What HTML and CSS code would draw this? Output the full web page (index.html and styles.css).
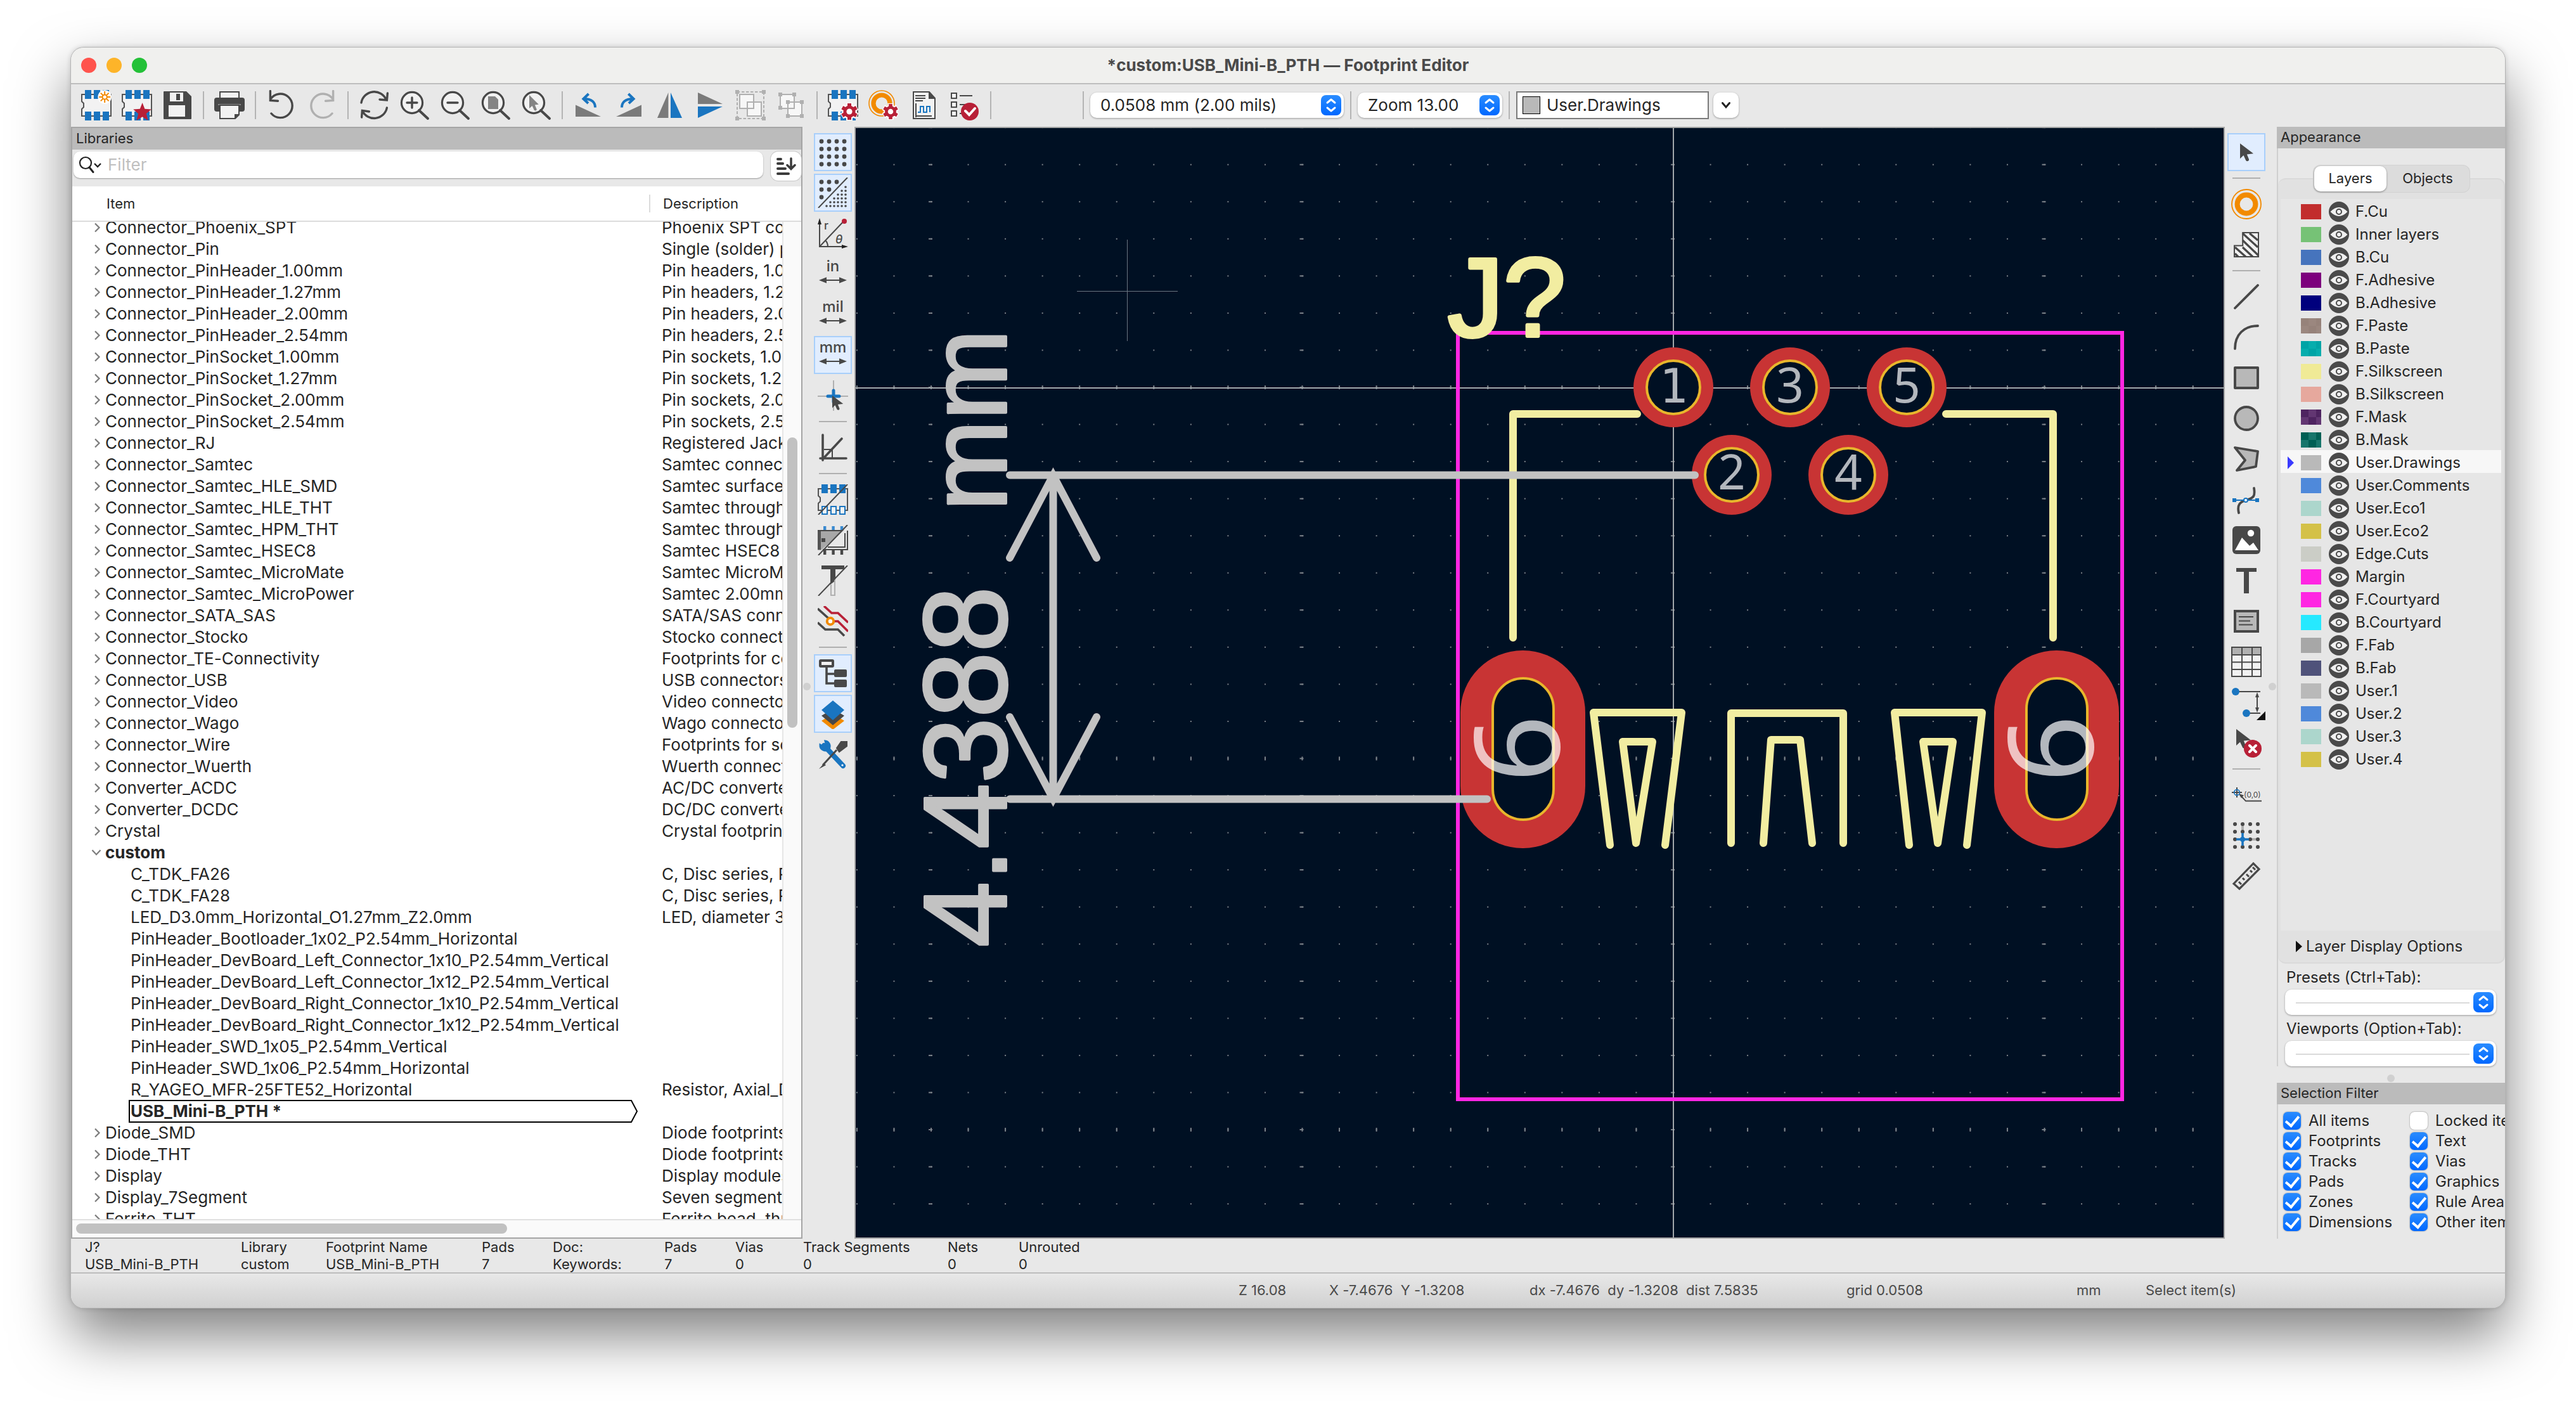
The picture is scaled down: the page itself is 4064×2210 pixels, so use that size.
FILE: index.html
```html
<!DOCTYPE html>
<html lang="en">
<head>
<meta charset="utf-8">
<title>*custom:USB_Mini-B_PTH — Footprint Editor</title>
<link rel="stylesheet" href="styles.css">
</head>
<body>
<svg class="defs" aria-hidden="true">
  <symbol id="fp" viewBox="0 0 24 24"><path d="M.5 3.5h23v17H.5v-5.500l1.500-1.500v-3L.5 9z" fill="#f2f2f2" stroke="#545454"/><path d="M3 0h5v7H3zM10 0h5v7h-5zM17 0h5v7h-5zM3 17h5v7H3zM10 17h5v7h-5zM17 17h5v7h-5z" fill="#1a75c0"/></symbol>
  <symbol id="gear" viewBox="0 0 14 14"><path d="M7 0v14M1 3.500l12 7M13 3.500l-12 7" stroke="#fff" stroke-width="5"/><circle cx="7" cy="7" r="5.800" fill="#fff"/><path d="M7 .5v13M1.400 3.800l11.200 6.400M12.600 3.800L1.400 10.200" stroke="#b82037" stroke-width="3"/><circle cx="7" cy="7" r="4.800" fill="#b82037"/><circle cx="7" cy="7" r="2.300" fill="#fff"/></symbol>
  <symbol id="lens" viewBox="0 0 24 24"><circle cx="10" cy="10" r="8.300" fill="#f2f2f2" stroke="#484848" stroke-width="1.600"/><path d="M15.500 16l7 6.500" stroke="#484848" stroke-width="2" stroke-linecap="round"/></symbol>
  <symbol id="dim" viewBox="0 0 24 24"><path d="M4 17h16" stroke="#484848"/><path d="M1 17l6-2.400v4.800zM23 17l-6-2.400v4.800z" fill="#484848"/></symbol>
  <symbol id="cursor" viewBox="0 0 12 16"><path d="M0 0v13l3-2.800 2 4.300c.8 1.400 3.200.6 2.600-1L5.900 9.300l5.600-.6z" fill="#484848"/></symbol>
  <symbol id="eye" viewBox="0 0 32 32"><circle cx="16" cy="16" r="16" fill="#4a4a4a"/><path d="M2.500 16Q16 2 29.500 16 16 30 2.500 16z" fill="#f0f0f0"/><circle cx="16" cy="16" r="4" fill="none" stroke="#4a4a4a" stroke-width="2"/></symbol>
  <symbol id="updown" viewBox="0 0 32 32"><path d="M10 12l6-5 6 5M10 20l6 5 6-5" fill="none" stroke="#fff" stroke-width="3" stroke-linecap="round" stroke-linejoin="round"/></symbol>
  <symbol id="closed" viewBox="0 0 12 16"><path d="M2 1.500L8.500 8 2 14.500" fill="none" stroke="#7c7c7c" stroke-width="2.200"/></symbol>
  <symbol id="open" viewBox="0 0 16 12"><path d="M1.500 2L8 9l6.500-7" fill="none" stroke="#7c7c7c" stroke-width="2.200"/></symbol>
</svg>

<div class="window">
  <header class="titlebar">
    <div class="lights"><button class="light red" aria-label="Close"></button><button class="light amber" aria-label="Minimize"></button><button class="light green" aria-label="Zoom"></button></div>
    <h1>*custom:USB_Mini-B_PTH — Footprint Editor</h1>
  </header>

  <div class="toolbar">
    <button class="icon" aria-label="New footprint"><svg viewBox="0 0 24 24"><use href="#fp"/><circle cx="18.600" cy="5.500" r="5.400" fill="#fff"/><path d="M18.600 1v3M18.600 7v3M14.100 5.500h3M20.100 5.500h3M15.400 2.300l2 2M19.800 6.700l2 2M21.800 2.300l-2 2M17.400 6.700l-2 2" stroke="#f28a00" stroke-width="1"/><circle cx="18.600" cy="5.500" r="1.800" fill="#fff" stroke="#f28a00"/></svg></button>
    <button class="icon" aria-label="Edit library footprint"><svg viewBox="0 0 24 24"><use href="#fp"/><path d="M16.300 10l1.900 4.900 5.200.3-4 3.400 1.400 5.400-4.500-2.900-4.600 2.900 1.400-5.400-4-3.400 5.300-.3z" fill="#b82037"/></svg></button>
    <button class="icon" aria-label="Save"><svg viewBox="0 0 24 24"><path d="M1 1.500q0-.5.500-.5H19l4 4v17.500q0 .5-.5.500h-21q-.5 0-.5-.5z" fill="#484848"/><path d="M6 2h10.500v7H6zM5 12h13v9H5z" fill="#f2f2f2"/><path d="M11 3h3v5h-3z" fill="#484848"/></svg></button>
    <i class="sep"></i>
    <button class="icon" aria-label="Print"><svg viewBox="0 0 24 24"><rect y="6" width="24" height="11" rx="2" fill="#484848"/><path d="M4.500 6V1.500h15V6" fill="#f2f2f2" stroke="#484848"/><path d="M3 11.500h18" stroke="#888" stroke-width="1"/><path d="M4.500 12h15v7.500l-3 3h-12z" fill="#f2f2f2" stroke="#484848"/><path d="M20 19h-4v4z" fill="#484848"/></svg></button>
    <i class="sep"></i>
    <button class="icon" aria-label="Undo"><svg viewBox="0 0 24 24" fill="none" stroke="#484848" stroke-width="1.700" stroke-linecap="round"><path d="M3.200.8v7.400l6 .4M3.500 7A9.400 9.400 0 1 1 4 18.500"/></svg></button>
    <button class="icon" aria-label="Redo"><svg viewBox="0 0 24 24" fill="none" stroke="#b0b0b0" stroke-width="1.700" stroke-linecap="round"><path d="M20.800.8v7.400l-6 .4M20.500 7A9.400 9.400 0 1 0 20 18.500"/></svg></button>
    <i class="sep"></i>
    <button class="icon" aria-label="Refresh"><svg viewBox="0 0 24 24" fill="none" stroke="#484848" stroke-width="1.700" stroke-linecap="round"><path d="M2 10A10.300 10.300 0 0 1 21.600 7.600M22.700 2.500l-.5 5.500-5.700-.5M22.200 14A10.300 10.300 0 0 1 2.800 16.400M2.300 21.500l.4-5.300 5.500.8"/></svg></button>
    <button class="icon" aria-label="Zoom in"><svg viewBox="0 0 24 24"><use href="#lens"/><path d="M6 10h8M10 6v8" stroke="#484848" stroke-width="1.700" stroke-linecap="round"/></svg></button>
    <button class="icon" aria-label="Zoom out"><svg viewBox="0 0 24 24"><use href="#lens"/><path d="M6 10h8" stroke="#484848" stroke-width="1.700" stroke-linecap="round"/></svg></button>
    <button class="icon" aria-label="Zoom to fit"><svg viewBox="0 0 24 24"><use href="#lens"/><path d="M6 5h5.500L14 7.500V15H6z" fill="#848484"/></svg></button>
    <button class="icon" aria-label="Zoom to selection"><svg viewBox="0 0 24 24"><use href="#lens"/><path d="M6.500 4v10.500l2.300-2 1.500 3.300c.6 1 2.400.4 2-.8l-1.400-3.300 3-.3z" fill="#848484"/></svg></button>
    <i class="sep"></i>
    <button class="icon" aria-label="Rotate counterclockwise"><svg viewBox="0 0 24 24"><path d="M2 11.700L22 21H2z" fill="#7a7a7a"/><path d="M17.500 13.800C17.500 9.500 14.500 7 9 7M12.300 3L8.200 7l3.800 3.500" fill="none" stroke="#1a75c0" stroke-width="2"/></svg></button>
    <button class="icon" aria-label="Rotate clockwise"><svg viewBox="0 0 24 24"><path d="M22 11.700L2 21h20z" fill="#7a7a7a"/><path d="M6.500 13.800C6.500 9.500 9.500 7 15 7M11.700 3l4.100 4-3.800 3.500" fill="none" stroke="#1a75c0" stroke-width="2"/></svg></button>
    <button class="icon" aria-label="Mirror horizontally"><svg viewBox="0 0 24 24"><path d="M11.200 2v20H2.500z" fill="#7a7a7a"/><path d="M13 2v20h9z" fill="#1a75c0"/></svg></button>
    <button class="icon" aria-label="Mirror vertically"><svg viewBox="0 0 24 24"><path d="M2.500 2L22 11H2.500z" fill="#7a7a7a"/><path d="M2.500 13H22L2.500 22z" fill="#1a75c0"/></svg></button>
    <button class="icon" aria-label="Group"><svg viewBox="0 0 24 24"><path d="M1.500 1.500h21v21h-21z" fill="none" stroke="#b0b0b0" stroke-dasharray="2.200 1.300"/><path d="M0 0h3v3H0zM21 0h3v3h-3zM0 21h3v3H0zM21 21h3v3h-3z" fill="#b0b0b0"/><path d="M3.500 3.500h11v11h-11zM9.500 9.500h11v11h-11z" fill="#f7f7f7" stroke="#b0b0b0"/></svg></button>
    <button class="icon" aria-label="Ungroup"><svg viewBox="0 0 24 24"><path d="M3.500 3.500h11v11h-11zM9.500 9.500h11v11h-11z" fill="#f7f7f7" stroke="#b0b0b0"/><path d="M2 2h3v3H2zM13 2h3v3h-3zM2 12.500h3v3H2zM8 8h3v3H8zM19 8h3v3h-3zM8 19h3v3H8zM19 19h3v3h-3z" fill="#b0b0b0"/></svg></button>
    <i class="sep"></i>
    <button class="icon" aria-label="Footprint properties"><svg viewBox="0 0 24 24"><use href="#fp"/><use href="#gear" x="10" y="10" width="14" height="14"/></svg></button>
    <button class="icon" aria-label="Default pad properties"><svg viewBox="0 0 24 24"><circle cx="10.500" cy="10.500" r="10" fill="none" stroke="#f28a00" stroke-width=".8"/><circle cx="10.500" cy="10.500" r="6.500" fill="none" stroke="#f28a00" stroke-width="3.600"/><use href="#gear" x="11" y="10.500" width="13" height="13"/></svg></button>
    <button class="icon" aria-label="Datasheet"><svg viewBox="0 0 24 24"><path d="M3.500 1.500H16l4.500 5v16h-17z" fill="#f2f2f2" stroke="#484848"/><path d="M15.500 1l5.500 6h-5.500z" fill="#484848"/><path d="M5 4.500h8M5 6.500h8M5 8.500h6M5.500 10.500v11M5 20.500h13" stroke="#484848"/><path d="M7 17.500h2V13h2.500v4.500H14V13h2.500v4.500" fill="none" stroke="#1a75c0"/></svg></button>
    <button class="icon" aria-label="Check footprint"><svg viewBox="0 0 24 24"><path d="M1.500 2.500h4v4h-4zM1.500 9.500h4v4h-4zM1.500 16.500h4v4h-4z" fill="#f7f7f7" stroke="#484848"/><path d="M8 4.500h10M8 11.500h5M8 18.500h4" stroke="#484848"/><circle cx="16" cy="17" r="7" fill="#b82037"/><path d="M12.500 16.500l3 3 4.500-5" fill="none" stroke="#fff" stroke-width="2" stroke-linecap="round"/></svg></button>
    <i class="sep"></i>
    <span class="spacer"></span>
    <i class="sep"></i>
    <div class="combos">
      <label class="pick grid-pick"><select aria-label="Grid"><option>0.0508 mm (2.00 mils)</option></select><svg class="ud"><use href="#updown"/></svg></label>
      <i class="sep"></i>
      <label class="pick zoom-pick"><select aria-label="Zoom"><option>Zoom 13.00</option></select><svg class="ud"><use href="#updown"/></svg></label>
      <i class="sep"></i>
      <div class="layerbox"><span class="chip"></span><span>User.Drawings</span></div>
      <button class="drop" aria-label="Choose layer"><svg viewBox="0 0 16 12"><path d="M2.500 2.500L8 9l5.500-6.500" fill="none" stroke="#222" stroke-width="3" stroke-linecap="round"/></svg></button>
    </div>
  </div>

  <main class="work">
    <section class="libs">
      <h2 class="caption">Libraries</h2>
      <div class="search">
        <label class="field"><svg viewBox="0 0 38 28"><circle cx="11" cy="11" r="9" fill="none" stroke="#222" stroke-width="2.200"/><path d="M17 18l6 7.500" stroke="#222" stroke-width="3" stroke-linecap="round"/><path d="M25 12l5 5 5-5" fill="none" stroke="#222" stroke-width="2.400"/></svg><input type="text" placeholder="Filter" aria-label="Filter"></label>
        <button class="sort" aria-label="Sort"><svg viewBox="0 0 34 30"><path d="M4 4h5M4 11h8M4 19h12M4 27h17" stroke="#3c3c3c" stroke-width="4" stroke-linecap="round"/><path d="M25 3v16M19 13.500l6 6 6-6" fill="none" stroke="#3c3c3c" stroke-width="3.500" stroke-linecap="round"/></svg></button>
      </div>
      <div class="heads"><span>Item</span><span>Description</span></div>
      <div class="treebox">
        <div class="clip">
          <table class="tree"><colgroup><col class="c1"><col></colgroup><tbody id="rows"></tbody></table>
        </div>
        <div class="vbar"><i></i></div>
      </div>
      <div class="hbar"><i></i></div>
    </section>

    <nav class="side left">
      <button class="tool on" aria-label="Show grid"><svg viewBox="0 0 24 24"><path d="M3 3.500h.01M9 3.500h.01M15 3.500h.01M21 3.500h.01M3 9.500h.01M9 9.500h.01M15 9.500h.01M21 9.500h.01M3 15.500h.01M9 15.500h.01M15 15.500h.01M21 15.500h.01M3 21.500h.01M9 21.500h.01M15 21.500h.01M21 21.500h.01" stroke="#484848" stroke-width="3.400" stroke-linecap="round"/></svg></button>
      <button class="tool on" aria-label="Grid overrides"><svg viewBox="0 0 24 24"><path d="M3 3.500h.01M9 3.500h.01M15 3.500h.01M3 9.500h.01M9 9.500h.01M3 15.500h.01" stroke="#484848" stroke-width="3.400" stroke-linecap="round"/><path d="M.5 24L23.500 0" stroke="#484848"/><path d="M22 7.500h.01M22 10.500h.01M19 10.500h.01M22 13.500h.01M19 13.500h.01M16 13.500h.01M22 16.500h.01M19 16.500h.01M16 16.500h.01M13 16.500h.01M22 19.500h.01M19 19.500h.01M16 19.500h.01M13 19.500h.01M10 19.500h.01M22 22.500h.01M19 22.500h.01M16 22.500h.01M13 22.500h.01M10 22.500h.01M7 22.500h.01" stroke="#484848" stroke-width="1.800" stroke-linecap="round"/></svg></button>
      <button class="tool" aria-label="Polar coordinates"><svg viewBox="0 0 24 24"><path d="M1.500 23V3M1 22.500h19M1.500 22.500L20.500 2.500M6 17.500q2 2 2 5" fill="none" stroke="#484848"/><path d="M0 5l1.500-5L3 5zM19 21l5 1.500-5 1.500z" fill="#222"/><circle cx="21" cy="2.500" r="2" fill="#b82037"/><text x="5" y="9" class="tiny">r</text><text x="14" y="20" class="tiny it">θ</text></svg></button>
      <button class="tool" aria-label="Inches"><svg viewBox="0 0 24 24"><text x="12" y="10" class="unit">in</text><use href="#dim"/></svg></button>
      <button class="tool" aria-label="Mils"><svg viewBox="0 0 24 24"><text x="12" y="10" class="unit">mil</text><use href="#dim"/></svg></button>
      <button class="tool on" aria-label="Millimeters"><svg viewBox="0 0 24 24"><text x="12" y="10" class="unit">mm</text><use href="#dim"/></svg></button>
      <button class="tool" aria-label="Full-window crosshairs"><svg viewBox="0 0 24 24"><path d="M12.500 0v24M0 12.500h24" stroke="#b0b0b0"/><path d="M12.500 8v9M8 12.500h9" stroke="#1a75c0" stroke-width="2.500" stroke-linecap="round"/><use href="#cursor" x="11.500" y="12" width="9" height="12"/></svg></button>
      <i class="rule"></i>
      <button class="tool" aria-label="Constrain angle"><svg viewBox="0 0 24 24"><path d="M4 2v20M2 20.500h20.500M5 20L19 5" stroke="#484848" stroke-width="1.800" stroke-linecap="round"/><path d="M5 13.500h6.500V20" fill="none" stroke="#484848"/></svg></button>
      <i class="rule"></i>
      <button class="tool" aria-label="Pad outlines"><svg viewBox="0 0 24 24"><path d="M.5 3.500h23v17H.5v-5.500l1.500-1.500v-3L.5 9z" fill="none" stroke="#545454"/><path d="M3 0h5v7H3zM10 0h5v7h-5zM17 0h5v7h-5z" fill="#1a75c0"/><path d="M3.500 17.500h4v6h-4zM10.500 17.500h4v6h-4zM17.500 17.500h4v6h-4z" fill="#f2f2f2" stroke="#1a75c0"/><path d="M.5 24L23.500 0" stroke="#484848"/></svg></button>
      <button class="tool" aria-label="Graphic outlines"><svg viewBox="0 0 24 24"><path d="M0 4h21L2.500 20H0z" fill="#a8a8a8"/><path d="M0 4h2.500v15.500H0z" fill="#545454"/><path d="M4 19.500h19.500V4.500M8 17.500h13.500V6.500M0 4.500h19" fill="none" stroke="#484848"/><path d="M3 12h3" stroke="#484848" stroke-width="3"/><path d="M5.600 1v3M12.300 1v3M19 1v3" stroke="#3a8ad0" stroke-width="2.200"/><path d="M5.600 20v3.500M12.300 20v3.500M19 20v3.500" stroke="#484848" stroke-width="2.200"/><path d="M.5 24L23.500 0" stroke="#484848"/></svg></button>
      <button class="tool" aria-label="Text outlines"><svg viewBox="0 0 24 24"><path d="M3 0h18v3h-7v9l-4 3V3H3z" fill="#484848"/><path d="M10.500 15v8.500h3V11" fill="none" stroke="#b0b0b0"/><path d="M.5 24L23.500 0" stroke="#484848"/></svg></button>
      <button class="tool" aria-label="High contrast"><svg viewBox="0 0 24 24" fill="none" stroke-width="1.800"><path d="M0 2l10 9M0 13l6 5.500h10l5 5" stroke="#484848"/><path d="M5 0l6 5.500h5L24 13M10 12h6l8 8" stroke="#b82037"/><circle cx="10" cy="12" r="2.600" fill="#fff" stroke="#f28a00" stroke-width="2"/></svg></button>
      <i class="rule"></i>
      <button class="tool on" aria-label="Library tree"><svg viewBox="0 0 24 24"><rect x="2" y="2" width="10" height="4.500" rx=".5" fill="#f2f2f2" stroke="#484848" stroke-width="2"/><path d="M7 7v13h7M7 12.500h7" fill="none" stroke="#484848" stroke-width="1.800"/><rect x="13" y="9" width="10" height="6" rx="1" fill="#484848"/><rect x="13" y="17" width="10" height="6" rx="1" fill="#484848"/></svg></button>
      <button class="tool on" aria-label="Layers"><svg viewBox="0 0 24 24"><path d="M3 17.500L12 12l9 5.500-9 7z" fill="#f28a00"/><path d="M3 13.500L12 8l9 5.500-9 7.500z" fill="#484848"/><path d="M3 9L12 1.500 21 9l-9 8z" fill="#1a75c0"/></svg></button>
      <button class="tool" aria-label="Properties"><svg viewBox="0 0 24 24"><path d="M5 5l15 16" stroke="#1a75c0" stroke-width="4" stroke-linecap="round"/><path d="M2 4.500a4 4 0 0 0 7 3A4 4 0 0 0 6 1.500L7 5 5 6.500z" fill="#1a75c0" stroke="#1a75c0" stroke-width="1.500"/><circle cx="19.500" cy="20.500" r=".8" fill="#fff"/><path d="M15 8.500L4 20.500" stroke="#484848" stroke-width="1.500"/><path d="M15 7l3.500-5 4.500 0v3.500L17 10z" fill="#484848" stroke="#484848"/><path d="M1 23.500l4-4.500 1.500 1.500z" fill="#484848"/></svg></button>
      <i class="grip"></i>
    </nav>

    <div class="canvas">
      <svg viewBox="1350 202 2158 1750" preserveAspectRatio="xMidYMid slice" role="img" aria-label="Footprint drawing">
        <defs>
          <pattern id="gridDots" x="2639" y="610" width="58.550" height="58.550" patternUnits="userSpaceOnUse"><path d="M0 0h2v2H0z" fill="#7b8188"/></pattern>
          <pattern id="gridCols" x="2636" y="610" width="585.500" height="58.550" patternUnits="userSpaceOnUse"><path d="M0 0h6v2H0z" fill="#7b8188"/></pattern>
          <pattern id="gridRows" x="2639" y="608" width="58.550" height="585.500" patternUnits="userSpaceOnUse"><path d="M0 0h2v6H0z" fill="#7b8188"/></pattern>
        </defs>
        <rect x="1350" y="202" width="2158" height="1750" fill="#001023"/>
        <rect x="1350" y="202" width="2158" height="1750" fill="url(#gridDots)"/>
        <rect x="1350" y="202" width="2158" height="1750" fill="url(#gridCols)"/>
        <rect x="1350" y="202" width="2158" height="1750" fill="url(#gridRows)"/>
        <path d="M2640 202v1750M1350 612h2158" stroke="#a3a7ab" stroke-width="2"/>
        <path d="M1778.500 378v160M1699 459.500h159" stroke="#6b7480"/>
        <path d="M2300 525h1048v1209H2300z" fill="none" stroke="#ff26e2" stroke-width="6"/>
        <g fill="none" stroke="#f2eda1" stroke-width="12" stroke-linecap="round" stroke-linejoin="round">
          <path d="M2583 653H2387v353M3070 653h169v353"/>
          <path d="M2540 1333L2514 1124h139l-26 209M2560 1170h47l-26 160zM3012 1333l-23-209h138l-24 209M3034 1170h47l-24 160z"/>
          <path d="M2731 1330V1125h177v205M2782 1330l12-163h46l19 163"/>
        </g>
        <text x="2284" y="530" class="ref">J?</text>
        <g fill="#c83434">
          <circle cx="2640" cy="611" r="63"/><circle cx="2824" cy="611" r="63"/><circle cx="3008" cy="611" r="63"/><circle cx="2732" cy="749" r="63"/><circle cx="2916" cy="749" r="63"/>
          <rect x="2304" y="1026" width="197" height="312" rx="98"/><rect x="3146" y="1026" width="197" height="312" rx="98"/>
        </g>
        <g fill="#001023" stroke="#e8b62c" stroke-width="4">
          <circle cx="2640" cy="611" r="42"/><circle cx="2824" cy="611" r="42"/><circle cx="3008" cy="611" r="42"/><circle cx="2732" cy="749" r="42"/><circle cx="2916" cy="749" r="42"/>
          <rect x="2355" y="1070" width="96" height="223" rx="48"/><rect x="3197" y="1070" width="96" height="223" rx="48"/>
        </g>
        <g class="pads">
          <text x="2640" y="635" class="one">1</text><text x="2824" y="635">3</text><text x="3008" y="635">5</text><text x="2732" y="772">2</text><text x="2916" y="772">4</text>
          <text class="big" transform="translate(2460 1181) rotate(-90)">6</text><text class="big" transform="translate(3302 1181) rotate(-90)">6</text>
        </g>
        <g fill="none" stroke="#c2c2c2" stroke-width="12" stroke-linecap="round">
          <path d="M1593 749.500H2674M1593 1260.500H2346M1661.500 750v510M1593 880l68.500-130 68.500 130M1593 1131l68.500 129 68.500-129"/>
        </g>
        <text class="measure" transform="translate(1587 1494) rotate(-90)">4.4388 <tspan x="688" class="mm">mm</tspan></text>
      </svg>
    </div>

    <nav class="side right">
      <button class="tool on" aria-label="Select"><svg viewBox="0 0 24 24"><use href="#cursor" x="7" y="5" width="11" height="15"/></svg></button>
      <i class="rule"></i>
      <button class="tool" aria-label="Add pad"><svg viewBox="0 0 24 24" fill="none" stroke="#f28a00"><circle cx="12" cy="12" r="11.500" stroke-width=".9"/><circle cx="12" cy="12" r="7.200" stroke-width="4"/></svg></button>
      <button class="tool" aria-label="Rule area"><svg viewBox="0 0 24 24"><path d="M2.500 21.500v-8.700h6.600V2.500h12.400v19z" fill="#f2f2f2" stroke="#484848"/><path d="M9 3l12 11M9 8.500l12.500 12M9 14l8 7.500M3 14l8.500 7.500M14.500 3L21 8.500M3 19l2.500 2.500" stroke="#484848" stroke-width="1.600"/></svg></button>
      <i class="rule"></i>
      <button class="tool" aria-label="Draw line"><svg viewBox="0 0 24 24"><path d="M3 21L21 3" stroke="#484848" stroke-width="1.900" stroke-linecap="round"/></svg></button>
      <button class="tool" aria-label="Draw arc"><svg viewBox="0 0 24 24"><path d="M3 21C3 10 10 3 21 3" fill="none" stroke="#484848" stroke-width="1.900" stroke-linecap="round"/></svg></button>
      <button class="tool" aria-label="Draw rectangle"><svg viewBox="0 0 24 24"><rect x="3" y="4" width="18" height="16" fill="#b8b8b8" stroke="#484848" stroke-width="2" stroke-linejoin="round"/></svg></button>
      <button class="tool" aria-label="Draw circle"><svg viewBox="0 0 24 24"><circle cx="12" cy="12" r="9" fill="#b8b8b8" stroke="#484848" stroke-width="1.900"/></svg></button>
      <button class="tool" aria-label="Draw polygon"><svg viewBox="0 0 24 24"><path d="M3 3l18 3-1.500 12L4.500 21 11 13z" fill="#b8b8b8" stroke="#484848" stroke-width="1.900" stroke-linejoin="round"/></svg></button>
      <button class="tool" aria-label="Draw bezier"><svg viewBox="0 0 24 24"><path d="M6 22.500C4.500 16 7 14 11.500 12.500 18 11 19 9 18 3" fill="none" stroke="#484848" stroke-width="1.900" stroke-linecap="round"/><path d="M2 12.500h19" stroke="#1a75c0"/><path d="M1 11h3v3H1zM19 11h3v3h-3z" fill="#1a75c0"/><circle cx="11.500" cy="12.500" r="1.500" fill="#fff" stroke="#1a75c0"/></svg></button>
      <button class="tool" aria-label="Add image"><svg viewBox="0 0 24 24"><rect x="1" y="1" width="22" height="22" rx="3" fill="#484848"/><circle cx="15.500" cy="6.500" r="2.600" fill="#fff"/><path d="M3 20l5.500-10 6 6.500 3-2.500 4 6z" fill="#fff"/></svg></button>
      <button class="tool" aria-label="Add text"><svg viewBox="0 0 24 24"><path d="M4 2h16v3h-6v17h-4V5H4z" fill="#484848"/></svg></button>
      <button class="tool" aria-label="Add text box"><svg viewBox="0 0 24 24"><rect x="3" y="4" width="18" height="16" fill="#b8b8b8" stroke="#484848" stroke-width="2"/><path d="M6 8.500h11.500M6 11.700h9M6 14.700h11" stroke="#484848"/></svg></button>
      <button class="tool" aria-label="Add table"><svg viewBox="0 0 24 24"><path d="M.5.500h23v23H.5z" fill="#f2f2f2"/><path d="M.5.500h23v6H.5z" fill="#b0b0b0"/><path d="M.5.500h23v23H.5zM.5 6.500h23M.5 12.300h23M.5 18h23M8.500.500v23M16.500.500v23" fill="none" stroke="#484848"/></svg></button>
      <button class="tool" aria-label="Add dimension"><svg viewBox="0 0 24 24"><path d="M4 3.500h19M13 20.500h10M20.500 6v12" stroke="#484848"/><path d="M19 8l1.500-4L22 8zM19 16l1.500 4 1.500-4z" fill="#484848"/><circle cx="3.500" cy="3.500" r="3" fill="#1a75c0"/><circle cx="12" cy="20.500" r="3" fill="#1a75c0"/></svg><svg class="more" viewBox="0 0 14 14"><path d="M14 0v14H0z" fill="#111"/></svg></button>
      <button class="tool" aria-label="Delete"><svg viewBox="0 0 24 24"><use href="#cursor" x="4" y="1" width="12" height="16"/><circle cx="17" cy="16.500" r="7" fill="#b82037"/><path d="M14.500 14l5 5M19.500 14l-5 5" stroke="#fff" stroke-width="2" stroke-linecap="round"/></svg></button>
      <i class="rule"></i>
      <button class="tool" aria-label="Set anchor"><svg viewBox="0 0 24 24"><path d="M4.500 6v8M.5 10h8" stroke="#484848"/><circle cx="4.500" cy="10" r="2.200" fill="none" stroke="#1a75c0" stroke-width=".8"/><path d="M7 12l4.500 4.800H24" fill="none" stroke="#484848"/><path d="M6 11l4 1.200-2 2.300z" fill="#484848"/><text x="10" y="14" class="coord">(0,0)</text></svg></button>
      <button class="tool" aria-label="Set grid origin"><svg viewBox="0 0 24 24"><path d="M9 2v8M15 15h6" stroke="#b0b0b0" stroke-width="2"/><path d="M3 3h.01M9 3h.01M15 3h.01M21 3h.01M3 9h.01M9 9h.01M15 9h.01M21 9h.01M3 15h.01M15 15h.01M21 15h.01M3 21h.01M9 21h.01M15 21h.01M21 21h.01" stroke="#484848" stroke-width="3" stroke-linecap="round"/><path d="M9 10v10M4 15h10" stroke="#1a75c0" stroke-width="1.800"/><circle cx="9" cy="15" r="2" fill="#1a75c0"/></svg></button>
      <button class="tool" aria-label="Measure"><svg viewBox="0 0 24 24"><path d="M2 18L17.500 2 22 6.500 6.500 22z" fill="none" stroke="#484848" stroke-width="1.600"/><path d="M6 16.500l2 2M9 13.500l1.500 1.500M12 10.500l2 2M15 7.500l1.500 1.500M17 5l2 2" stroke="#484848" stroke-width="1.500"/></svg></button>
      <i class="grip"></i>
    </nav>

    <aside class="panel">
      <h2 class="caption">Appearance</h2>
      <div class="appearance">
        <div class="tabs"><button class="active">Layers</button><button>Objects</button></div>
        <div class="book">
          <ul class="layers" id="layers"></ul>
          <button class="disclose"><svg viewBox="0 0 10 18"><path d="M0 0l10 9-10 9z" fill="#111"/></svg>Layer Display Options</button>
        </div>
        <label class="lab" for="presets">Presets (Ctrl+Tab):</label>
        <div class="pick blank"><select id="presets"><option></option></select><i></i><svg class="ud"><use href="#updown"/></svg></div>
        <label class="lab" for="views">Viewports (Option+Tab):</label>
        <div class="pick blank"><select id="views"><option></option></select><i></i><svg class="ud"><use href="#updown"/></svg></div>
      </div>
      <div class="gripline"><i></i></div>
      <h2 class="caption">Selection Filter</h2>
      <div class="filter">
        <label><input type="checkbox" checked>All items</label><label><input type="checkbox">Locked items</label>
        <label><input type="checkbox" checked>Footprints</label><label><input type="checkbox" checked>Text</label>
        <label><input type="checkbox" checked>Tracks</label><label><input type="checkbox" checked>Vias</label>
        <label><input type="checkbox" checked>Pads</label><label><input type="checkbox" checked>Graphics</label>
        <label><input type="checkbox" checked>Zones</label><label><input type="checkbox" checked>Rule Areas</label>
        <label><input type="checkbox" checked>Dimensions</label><label><input type="checkbox" checked>Other items</label>
      </div>
    </aside>
  </main>

  <dl class="info">
    <div><dt>J?</dt><dd>USB_Mini-B_PTH</dd></div><div><dt>Library</dt><dd>custom</dd></div><div><dt>Footprint Name</dt><dd>USB_Mini-B_PTH</dd></div><div><dt>Pads</dt><dd>7</dd></div><div><dt>Doc:</dt><dd>Keywords:</dd></div><div><dt>Pads</dt><dd>7</dd></div><div><dt>Vias</dt><dd>0</dd></div><div><dt>Track Segments</dt><dd>0</dd></div><div><dt>Nets</dt><dd>0</dd></div><div><dt>Unrouted</dt><dd>0</dd></div>
  </dl>
  <footer class="status"><span></span><span>Z 16.08</span><span>X -7.4676&nbsp; Y -1.3208</span><span>dx -7.4676&nbsp; dy -1.3208&nbsp; dist 7.5835</span><span>grid 0.0508</span><span>mm</span><span>Select item(s)</span></footer>
</div>
<script src="app.js"></script>
</body>
</html>
```
FILE: app.js
```js
// Library tree: name, description, and kind (p = library, o = open library, c = footprint, s = selected)
const rows = [
  ['Connector_Phoenix_SPT', 'Phoenix SPT connectors'],
  ['Connector_Pin', 'Single (solder) pins'],
  ['Connector_PinHeader_1.00mm', 'Pin headers, 1.00mm'],
  ['Connector_PinHeader_1.27mm', 'Pin headers, 1.27mm'],
  ['Connector_PinHeader_2.00mm', 'Pin headers, 2.00mm'],
  ['Connector_PinHeader_2.54mm', 'Pin headers, 2.54mm'],
  ['Connector_PinSocket_1.00mm', 'Pin sockets, 1.00mm'],
  ['Connector_PinSocket_1.27mm', 'Pin sockets, 1.27mm'],
  ['Connector_PinSocket_2.00mm', 'Pin sockets, 2.00mm'],
  ['Connector_PinSocket_2.54mm', 'Pin sockets, 2.54mm'],
  ['Connector_RJ', 'Registered Jack'],
  ['Connector_Samtec', 'Samtec connectors'],
  ['Connector_Samtec_HLE_SMD', 'Samtec surface mount'],
  ['Connector_Samtec_HLE_THT', 'Samtec through hole'],
  ['Connector_Samtec_HPM_THT', 'Samtec through hole'],
  ['Connector_Samtec_HSEC8', 'Samtec HSEC8'],
  ['Connector_Samtec_MicroMate', 'Samtec MicroMate'],
  ['Connector_Samtec_MicroPower', 'Samtec 2.00mm'],
  ['Connector_SATA_SAS', 'SATA/SAS connectors'],
  ['Connector_Stocko', 'Stocko connectors'],
  ['Connector_TE-Connectivity', 'Footprints for connectors'],
  ['Connector_USB', 'USB connectors'],
  ['Connector_Video', 'Video connectors'],
  ['Connector_Wago', 'Wago connectors'],
  ['Connector_Wire', 'Footprints for soldering'],
  ['Connector_Wuerth', 'Wuerth connectors'],
  ['Converter_ACDC', 'AC/DC converters'],
  ['Converter_DCDC', 'DC/DC converters'],
  ['Crystal', 'Crystal footprints'],
  ['custom', '', 'o'],
  ['C_TDK_FA26', 'C, Disc series, Radial', 'c'],
  ['C_TDK_FA28', 'C, Disc series, Radial', 'c'],
  ['LED_D3.0mm_Horizontal_O1.27mm_Z2.0mm', 'LED, diameter 3.0mm', 'c'],
  ['PinHeader_Bootloader_1x02_P2.54mm_Horizontal', '', 'c'],
  ['PinHeader_DevBoard_Left_Connector_1x10_P2.54mm_Vertical', '', 'c'],
  ['PinHeader_DevBoard_Left_Connector_1x12_P2.54mm_Vertical', '', 'c'],
  ['PinHeader_DevBoard_Right_Connector_1x10_P2.54mm_Vertical', '', 'c'],
  ['PinHeader_DevBoard_Right_Connector_1x12_P2.54mm_Vertical', '', 'c'],
  ['PinHeader_SWD_1x05_P2.54mm_Vertical', '', 'c'],
  ['PinHeader_SWD_1x06_P2.54mm_Horizontal', '', 'c'],
  ['R_YAGEO_MFR-25FTE52_Horizontal', 'Resistor, Axial_DIN', 'c'],
  ['USB_Mini-B_PTH *', '', 's'],
  ['Diode_SMD', 'Diode footprints'],
  ['Diode_THT', 'Diode footprints'],
  ['Display', 'Display modules'],
  ['Display_7Segment', 'Seven segment'],
  ['Ferrite_THT', 'Ferrite bead, through']
];
const chevron = { p: '<svg class="chev"><use href="#closed"/></svg>', o: '<svg class="chev down"><use href="#open"/></svg>' };
const frame = '<svg class="frame" viewBox="0 0 804 36"><path d="M1 1h792l9 17-9 17H1z" fill="none" stroke="#000" stroke-width="2"/></svg>';
document.getElementById('rows').innerHTML = rows.map(([name, text, kind = 'p']) =>
  `<tr class="row-${kind}"><td>${chevron[kind] || ''}${kind === 's' ? frame : ''}<span>${name}</span></td><td>${text}</td></tr>`).join('');

const layers = [
  ['F.Cu', '#c22d2d'], ['Inner layers', '#76c276'], ['B.Cu', '#4674bd'], ['F.Adhesive', '#7d007d'],
  ['B.Adhesive', '#00007d'], ['F.Paste', '#9b877f', '#96827a'], ['B.Paste', '#06adad', '#00a4a6'],
  ['F.Silkscreen', '#f0ea96'], ['B.Silkscreen', '#e6a89d'], ['F.Mask', '#623672', '#4e2460'],
  ['B.Mask', '#17756b', '#005f54'], ['User.Drawings', '#b9b9b9'], ['User.Comments', '#4f89da'],
  ['User.Eco1', '#acd6cc'], ['User.Eco2', '#d4c148'], ['Edge.Cuts', '#cbcdc6'], ['Margin', '#ff26e2'],
  ['F.Courtyard', '#ff26e2'], ['B.Courtyard', '#26e9ff'], ['F.Fab', '#a7a7a7'], ['B.Fab', '#4f527a'],
  ['User.1', '#b9b9b9'], ['User.2', '#4f89da'], ['User.3', '#acd6cc'], ['User.4', '#d4c148']
];
document.getElementById('layers').innerHTML = layers.map(([name, a, b = a]) =>
  `<li class="${name === 'User.Drawings' ? 'current' : ''}"><i class="swatch" style="--a:${a};--b:${b}"></i><svg class="eye"><use href="#eye"/></svg>${name}</li>`).join('');
```
FILE: styles.css
```css
* { box-sizing: border-box; margin: 0; padding: 0; }
body { display: flex; min-height: 100vh; padding: 75px 112px 147px; background: #fff; font: 22px/28px Inter, "Liberation Sans", sans-serif; font-feature-settings: "calt" 0; color: #262626; }
button, input, select { font: inherit; font-feature-settings: inherit; color: inherit; border: 0; background: none; appearance: none; }
svg { display: block; }
.defs { position: absolute; width: 0; height: 0; }
.window { flex: 1; display: flex; flex-direction: column; min-width: 0; border-radius: 20px; overflow: hidden; background: #e8e8e8; box-shadow: 0 0 0 1px #b4b4b4, 0 0 8px rgba(0,0,0,.2), 0 44px 90px rgba(0,0,0,.5); }

.titlebar { display: flex; align-items: center; justify-content: center; position: relative; height: 58px; background: #f0f0ee; border-bottom: 2px solid #bebebe; }
.titlebar h1 { font-size: 26px; font-weight: 700; color: #4a4a4a; }
.lights { position: absolute; left: 16px; display: flex; gap: 16px; }
.light { width: 24px; height: 24px; border-radius: 50%; }
.red { background: #ff544d; } .amber { background: #fdb429; } .green { background: #24c138; }

.toolbar { display: flex; align-items: center; gap: 16px; height: 67px; padding: 0 16px 2px; }
.icon svg { width: 48px; height: 48px; }
.sep { width: 2px; height: 44px; background: #b4b4b4; }
.spacer { width: 112px; }
.combos { display: flex; align-items: center; gap: 10px; margin-left: -6px; }
.pick { position: relative; display: block; }
.pick select { width: 100%; height: 40px; padding: 0 16px; border-radius: 10px; background: #fff; box-shadow: 0 1px 3px rgba(0,0,0,.35); font-size: 26px; }
.grid-pick { width: 400px; }
.zoom-pick { width: 228px; }
.ud { position: absolute; top: 4px; right: 4px; width: 32px; height: 32px; border-radius: 8px; background: linear-gradient(#2a8cff, #0068ff); }
.layerbox { display: flex; align-items: center; gap: 10px; width: 304px; height: 44px; padding: 0 8px; border: 2px solid #7b7b7b; background: #fff; font-size: 26px; }
.chip { width: 28px; height: 28px; border: 1px solid #000; background: #b9b9b9; }
.drop { display: grid; place-items: center; width: 40px; height: 40px; margin-left: -3px; border-radius: 10px; background: #fff; box-shadow: 0 1px 3px rgba(0,0,0,.35); }
.drop svg { width: 16px; height: 12px; }

.work { flex: 1; display: flex; min-height: 0; }
.caption { height: 34px; padding-left: 6px; font-size: 22px; font-weight: 400; line-height: 32px; background: #bbb; }
.libs { display: flex; flex-direction: column; flex: 0 0 1154px; border: 2px solid #a5a5a5; }
.search { display: flex; gap: 12px; padding: 3px 0 10px 2px; height: 58px; }
.field { flex: 1; display: flex; align-items: center; gap: 8px; height: 42px; padding-left: 8px; border-radius: 10px; background: #fff; box-shadow: 0 1px 2px rgba(0,0,0,.35); }
.field svg { width: 38px; height: 28px; }
.field input { flex: 1; font-size: 26px; }
.field input::placeholder { color: #bfbfbf; }
.sort { display: grid; place-items: center; width: 48px; height: 46px; border-radius: 12px; background: #fff; box-shadow: 0 0 0 1px #c8c8c8; }
.sort svg { width: 34px; height: 30px; }
.heads { display: flex; align-items: center; height: 56px; background: #fff; border-bottom: 2px solid #dcdcdc; }
.heads span:first-child { width: 912px; padding-left: 54px; border-right: 2px solid #dcdcdc; }
.heads span:last-child { padding-left: 20px; }
.treebox { flex: 1 1 0; display: flex; min-height: 0; overflow: hidden; background: #fff; }
.clip { flex: 1; overflow: hidden; }
.vbar { width: 30px; padding: 340px 0 0 6px; border-left: 2px solid #e6e6e6; background: #fafafa; }
.vbar i { display: block; width: 16px; height: 458px; border-radius: 8px; background: #c1c1c1; }
.hbar { height: 29px; padding: 5px 6px; border-top: 2px solid #e0e0e0; background: #fafafa; }
.hbar i { display: block; width: 680px; height: 16px; border-radius: 8px; background: #c1c1c1; }
.tree { width: 100%; margin-top: -8px; table-layout: fixed; border-collapse: collapse; font-size: 26px; line-height: 34px; }
.tree .c1 { width: 930px; }
.tree td { position: relative; height: 34px; white-space: nowrap; overflow: hidden; padding-left: 52px; }
.tree td + td { padding-left: 0; }
.row-c td:first-child, .row-s td:first-child { padding-left: 92px; }
.row-o, .row-s { font-weight: 700; }
.chev { position: absolute; left: 34px; top: 9px; width: 12px; height: 16px; }
.chev.down { left: 30px; top: 11px; width: 16px; height: 12px; }
.row-s td { overflow: visible; }
.frame { position: absolute; left: 89px; top: -1px; width: 804px; height: 36px; }

.side { position: relative; flex: 0 0 82px; display: flex; flex-direction: column; gap: 4px; padding-top: 10px; }
.left { padding-left: 18px; }
.right { padding-left: 4px; }
.tool { position: relative; display: grid; place-items: center; width: 60px; height: 60px; }
.tool svg { width: 48px; height: 48px; }
.tool.on { border: 2px solid #a8cffb; background: #e1edfe; }
.tool .more { position: absolute; right: 0; bottom: 2px; width: 14px; height: 14px; }
.rule { width: 44px; height: 2px; margin: 6px 8px; background: #b0b0b0; }
.grip { position: absolute; left: 1px; top: 50%; width: 12px; height: 12px; border-radius: 50%; background: #d0d0d0; }
.right .grip { left: 69px; }
.unit { font: 500 12px Inter, sans-serif; text-anchor: middle; fill: #484848; }
.tiny { font: 500 9px Inter, sans-serif; fill: #484848; }
.it { font-style: italic; }
.coord { font: 6px Inter, sans-serif; fill: #484848; }

.canvas { flex: 1; min-width: 0; overflow: hidden; border: 2px solid #a5a5a5; background: #001023; }
.canvas svg { width: 100%; height: 100%; }
.ref { font: 176px "Liberation Sans", sans-serif; fill: #f2eda1; stroke: #f2eda1; stroke-width: 6px; stroke-linejoin: round; }
.measure { font: 186px "Liberation Sans", sans-serif; fill: #c2c2c2; stroke: #c2c2c2; stroke-width: 4px; stroke-linejoin: round; }
.mm { font-size: 172px; }
.pads { font: 76px "Noto Sans", sans-serif; fill: #fff; fill-opacity: .7; text-anchor: middle; }
.one { font: 74px "DejaVu Sans Mono", monospace; }
.big { font-size: 186px; }

.panel { flex: 0 0 360px; display: flex; flex-direction: column; overflow: hidden; }
.appearance { flex: 1; display: flex; flex-direction: column; padding-top: 26px; border-left: 2px solid #cfcfcf; font-size: 24px; }
.tabs { position: relative; align-self: center; display: flex; width: 248px; height: 44px; padding: 2px; border-radius: 12px; background: #dcdcdc; box-shadow: inset 0 0 0 1px #d2d2d2; font-size: 22px; }
.tabs button { flex: 1; padding-bottom: 2px; border-radius: 10px; }
.tabs .active { flex: 0 0 114px; background: #fff; box-shadow: 0 1px 3px rgba(0,0,0,.4); }
.book { flex: 1; display: flex; flex-direction: column; margin-top: -23px; padding: 31px 4px 0; border: 2px solid #dadada; border-left: 0; border-radius: 12px; background: #e1e1e1; }
.layers { flex: 1; list-style: none; background: #e6e6e6; }
.layers li { position: relative; display: flex; align-items: center; height: 36px; padding: 3px 0 0 32px; }
.layers .current { background: #f7f7f7; }
.current::before { content: ""; position: absolute; left: 11px; border: 10px solid transparent; border-left-color: #3a3aff; border-right: 0; }
.swatch { width: 32px; height: 24px; margin-right: 12px; background: conic-gradient(var(--b) 25%, var(--a) 0 50%, var(--b) 0 75%, var(--a) 0) 12px 0 / 24px 24px; }
.eye { width: 32px; height: 32px; margin-right: 10px; }
.disclose { display: flex; align-items: center; gap: 6px; height: 50px; padding-left: 24px; }
.disclose svg { width: 10px; height: 18px; }
.lab { margin: 8px 0 5px 13px; }
.blank { margin: 0 14px 0 11px; }
.blank i { position: absolute; left: 17px; right: 42px; top: 20px; height: 2px; background: #dadada; }
.gripline { display: grid; place-items: center; height: 26px; padding-top: 12px; }
.gripline i { width: 12px; height: 12px; border-radius: 50%; background: #d0d0d0; }
.filter { display: grid; grid-template-columns: 200px 200px; grid-auto-rows: 32px; height: 212px; padding: 10px 0 0 8px; border-left: 2px solid #cfcfcf; white-space: nowrap; font-size: 24px; }
.filter label { display: flex; align-items: center; gap: 12px; }
.filter input { display: grid; place-items: center; width: 28px; height: 28px; border-radius: 7px; background: #fff; box-shadow: 0 0 2px rgba(0,0,0,.5); }
.filter input:checked { background: linear-gradient(#2a8cff, #0068ff); }
.filter input:checked::before { content: ""; width: 9px; height: 17px; margin-bottom: 4px; border: solid #fff; border-width: 0 4px 4px 0; transform: rotate(40deg); }

.info { display: grid; grid-template-columns: 246px 134px 246px 112px 176px 112px 107px 228px 112px auto; padding: 0 22px; height: 53px; line-height: 27px; white-space: nowrap; }
.status { display: grid; grid-template-columns: 1842px 143px 316px 500px 363px 109px auto; align-items: center; height: 56px; padding-bottom: 2px; border-top: 2px solid #bdbdbd; background: linear-gradient(#e8e8e8, #d0d0d0); color: #4a4a4a; }
```
